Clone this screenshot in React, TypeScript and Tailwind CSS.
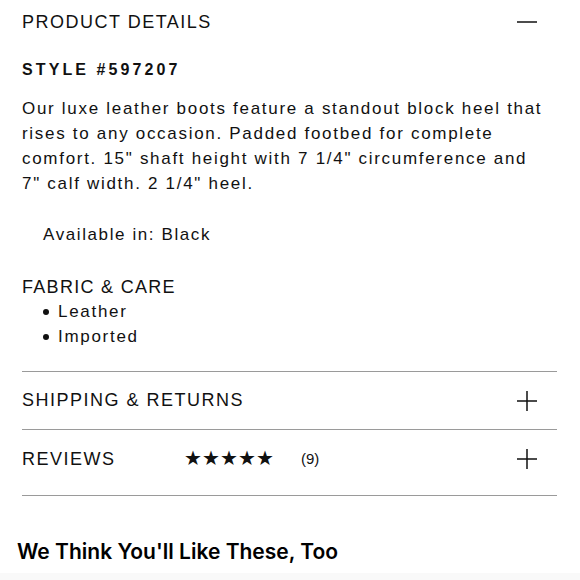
import React from "react";

const Plus = () => (
  <svg width="20" height="20" viewBox="0 0 20 20" className="block">
    <path d="M10 0V20M0 10H20" stroke="#111" strokeWidth="1.5" fill="none" />
  </svg>
);

const Minus = () => (
  <svg width="20" height="20" viewBox="0 0 20 20" className="block">
    <path d="M0 10H20" stroke="#111" strokeWidth="1.5" fill="none" />
  </svg>
);

export default function App() {
  return (
    <div className="w-[580px] h-[580px] overflow-hidden bg-white text-[#111] font-['Liberation_Sans',Arial,sans-serif]">
      <div className="pl-[22px] pr-[23px]">
        <div className="flex items-center justify-between h-[44px]">
          <span className="text-[18px] tracking-[1.5px]">PRODUCT DETAILS</span>
          <span className="mr-[20px]"><Minus /></span>
        </div>
        <div className="mt-[15px] text-[16px] font-bold tracking-[3.1px] leading-[22px]">STYLE #597207</div>
        <p className="mt-[15px] w-[525px] text-[17px] tracking-[1.7px] leading-[25px]">
          Our luxe leather boots feature a standout block heel that rises to any occasion. Padded footbed for complete comfort. 15" shaft height with 7 1/4" circumference and 7" calf width. 2 1/4" heel.
        </p>
        <div className="mt-[26px] pl-[21px] text-[17px] tracking-[1.6px] leading-[25px]">Available in: Black</div>
        <div className="mt-[28px] text-[18px] tracking-[1.3px] leading-[24px]">FABRIC &amp; CARE</div>
        <ul className="pl-[21px] text-[17px] tracking-[1.7px] leading-[25px]">
          <li className="flex items-center gap-[9px]"><span className="w-[6px] h-[6px] rounded-full bg-[#111]" />Leather</li>
          <li className="flex items-center gap-[9px]"><span className="w-[6px] h-[6px] rounded-full bg-[#111]" />Imported</li>
        </ul>
        <div className="mt-[22px] border-t border-[#9a9a9a]">
          <div className="flex items-center justify-between h-[57px]">
            <span className="text-[18px] tracking-[1.5px]">SHIPPING &amp; RETURNS</span>
            <span className="mr-[20px]"><Plus /></span>
          </div>
        </div>
        <div className="border-t border-[#9a9a9a]">
          <div className="flex items-center h-[58px] mb-[7px]">
            <span className="w-[162px] text-[18px] tracking-[1.5px]">REVIEWS</span>
            <span className="text-[19.5px] leading-none">★★★★★</span>
            <span className="ml-[27px] text-[15px]">(9)</span>
            <span className="ml-auto mr-[20px]"><Plus /></span>
          </div>
        </div>
        <div className="border-t border-[#9a9a9a]" />
      </div>
      <div className="mt-[42px] pl-[17px] text-[21px] leading-[28px] font-semibold font-['Inter',sans-serif] text-black">We Think You'll Like These, Too</div>
      <div className="mt-[7px] h-[8px] bg-[#f9f9f9]" />
    </div>
  );
}
